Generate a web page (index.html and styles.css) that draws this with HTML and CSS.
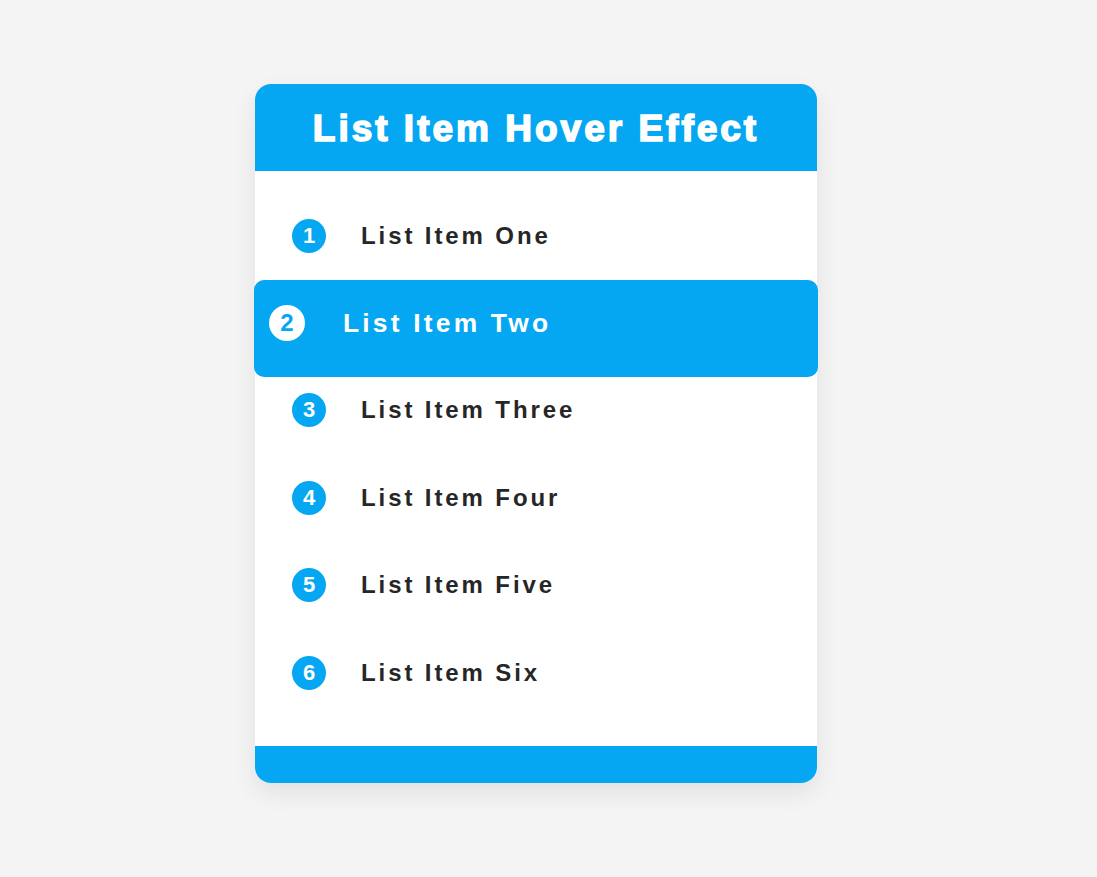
FILE: index.html
```html
<!DOCTYPE html>
<html lang="en">
<head>
<meta charset="utf-8">
<title>List Item Hover Effect</title>
<link rel="stylesheet" href="styles.css">
</head>
<body>
<div class="page">
  <div class="card">
    <div class="card-header">
      <h1 class="title">List Item Hover Effect</h1>
    </div>
    <ul class="list">
      <li class="item"><span class="num">1</span><span class="label">List Item One</span></li>
      <li class="item item-active"><span class="num">2</span><span class="label">List Item Two</span></li>
      <li class="item"><span class="num">3</span><span class="label">List Item Three</span></li>
      <li class="item"><span class="num">4</span><span class="label">List Item Four</span></li>
      <li class="item"><span class="num">5</span><span class="label">List Item Five</span></li>
      <li class="item"><span class="num">6</span><span class="label">List Item Six</span></li>
    </ul>
    <div class="card-footer"></div>
  </div>
</div>
</body>
</html>
```
FILE: styles.css
```css
* { box-sizing: border-box; }
html, body {
  margin: 0;
  padding: 0;
  background: #f4f4f4;
  font-family: "Liberation Sans", Arial, sans-serif;
}
.page {
  padding: 84px 0 0 255px;
  min-height: 877px;
}
.card {
  width: 562px;
  background: #ffffff;
  border-radius: 16px;
  box-shadow: 0 10px 25px rgba(0, 0, 0, 0.08);
}
.card-header {
  height: 87px;
  background: #05a7f2;
  border-radius: 16px 16px 0 0;
  display: flex;
  align-items: center;
  justify-content: center;
}
.title {
  margin: 0;
  color: #ffffff;
  font-size: 37px;
  font-weight: 700;
  letter-spacing: 3px;
  line-height: 1;
  padding-top: 2px;
  -webkit-text-stroke: 1.6px #ffffff;
}
.list {
  list-style: none;
  margin: 0;
  padding: 21px 0 29.5px 0;
}
.item {
  position: relative;
  height: 87.4px;
  display: flex;
  align-items: center;
  padding-left: 37px;
}
.num {
  position: relative;
  width: 34px;
  height: 34px;
  border-radius: 50%;
  background: #05a7f2;
  color: #ffffff;
  font-size: 22px;
  font-weight: 700;
  display: flex;
  align-items: center;
  justify-content: center;
  margin-right: 35px;
  flex: none;
}
.label {
  position: relative;
  color: #262626;
  font-size: 24px;
  font-weight: 700;
  letter-spacing: 2.9px;
}
.item-active {
  padding-left: 14px;
}
.item-active::before {
  content: "";
  position: absolute;
  top: 1px;
  bottom: -10px;
  left: -1px;
  right: -1px;
  background: #05a7f2;
  border-radius: 10px;
}
.item-active .num {
  width: 36px;
  height: 36px;
  background: #ffffff;
  color: #05a7f2;
  font-size: 24px;
  margin-right: 38px;
}
.item-active .label {
  color: #ffffff;
  font-size: 26.4px;
  letter-spacing: 3.2px;
}
.card-footer {
  height: 37px;
  background: #05a7f2;
  border-radius: 0 0 16px 16px;
}
```
